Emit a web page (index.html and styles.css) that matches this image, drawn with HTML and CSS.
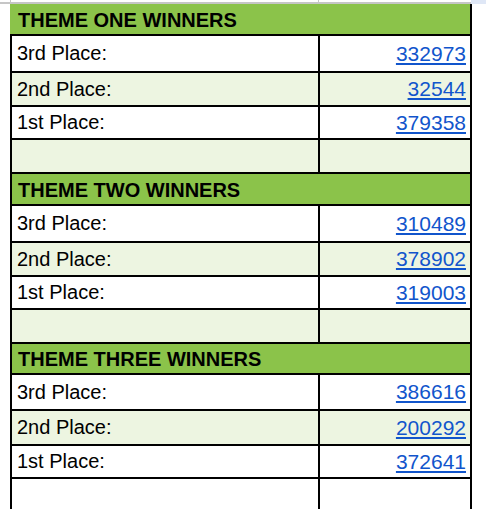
FILE: index.html
```html
<!DOCTYPE html>
<html>
<head>
<meta charset="utf-8">
<link rel="stylesheet" href="styles.css">
</head>
<body>
<div class="topbar">
  <div class="tb-gutter"></div>
  <div class="tb-col tb-a"></div>
  <div class="tb-col tb-b"></div>
  <div class="tb-corner"></div>
</div>
<div class="sheet">
  <div class="row head first"><div class="cell title">THEME ONE WINNERS</div></div>
  <div class="row r1"><div class="cell label">3rd Place:</div><div class="cell value"><a href="#">332973</a></div></div>
  <div class="row r2 alt"><div class="cell label">2nd Place:</div><div class="cell value"><a href="#">32544</a></div></div>
  <div class="row r3"><div class="cell label">1st Place:</div><div class="cell value"><a href="#">379358</a></div></div>
  <div class="row r4 alt"><div class="cell label"></div><div class="cell value"></div></div>

  <div class="row head"><div class="cell title">THEME TWO WINNERS</div></div>
  <div class="row r1"><div class="cell label">3rd Place:</div><div class="cell value"><a href="#">310489</a></div></div>
  <div class="row r2 alt"><div class="cell label">2nd Place:</div><div class="cell value"><a href="#">378902</a></div></div>
  <div class="row r3"><div class="cell label">1st Place:</div><div class="cell value"><a href="#">319003</a></div></div>
  <div class="row r4 alt"><div class="cell label"></div><div class="cell value"></div></div>

  <div class="row head h3"><div class="cell title">THEME THREE WINNERS</div></div>
  <div class="row r1 s3a"><div class="cell label">3rd Place:</div><div class="cell value"><a href="#">386616</a></div></div>
  <div class="row r2 alt s3b"><div class="cell label">2nd Place:</div><div class="cell value"><a href="#">200292</a></div></div>
  <div class="row r3"><div class="cell label">1st Place:</div><div class="cell value"><a href="#">372641</a></div></div>
  <div class="row r4"><div class="cell label"></div><div class="cell value"></div></div>
</div>
</body>
</html>
```
FILE: styles.css
```css
html, body {
  margin: 0;
  padding: 0;
  background: #ffffff;
}
body {
  font-family: "Liberation Sans", Arial, sans-serif;
  font-size: 20px;
  color: #000000;
  overflow: hidden;
}
.topbar {
  display: flex;
  height: 2px;
  border-bottom: 2px solid #c6c6c6;
}
.tb-gutter {
  width: 10px;
}
.tb-col {
  border-left: 1px solid #c6c6c6;
}
.tb-a {
  width: 307px;
}
.tb-b {
  width: 151px;
}
.tb-corner {
  flex: 1;
  background: #dfe7f6;
  margin-bottom: -2px;
  margin-left: 1px;
}
.sheet {
  margin-left: 10px;
  width: 458px;
  border-left: 2px solid #000000;
  border-right: 2px solid #000000;
}
.row {
  display: flex;
  border-bottom: 2px solid #000000;
  background: #ffffff;
}
.row.alt {
  background: #edf5e1;
}
.row.head {
  background: #8bc34a;
  height: 30px;
}
.row.head.first {
  margin-left: -2px;
  padding-left: 2px;
}
.row.head.h3 {
  height: 29px;
}
.r1 { height: 35px; }
.r2 { height: 32px; }
.r3 { height: 31px; }
.r4 { height: 32px; }
.s3a { height: 34px; }
.s3b { height: 33px; }
.cell {
  display: flex;
  align-items: center;
  white-space: nowrap;
}
.title {
  font-weight: bold;
  padding-left: 6px;
  padding-top: 2px;
}
.label {
  width: 301px;
  padding-left: 5px;
  border-right: 2px solid #000000;
}
.value {
  flex: 1;
  justify-content: flex-end;
  padding-right: 4px;
  font-size: 21px;
}
.value a {
  color: #1155cc;
  text-decoration: underline;
  text-decoration-thickness: 2px;
  text-underline-offset: 2px;
}
```
